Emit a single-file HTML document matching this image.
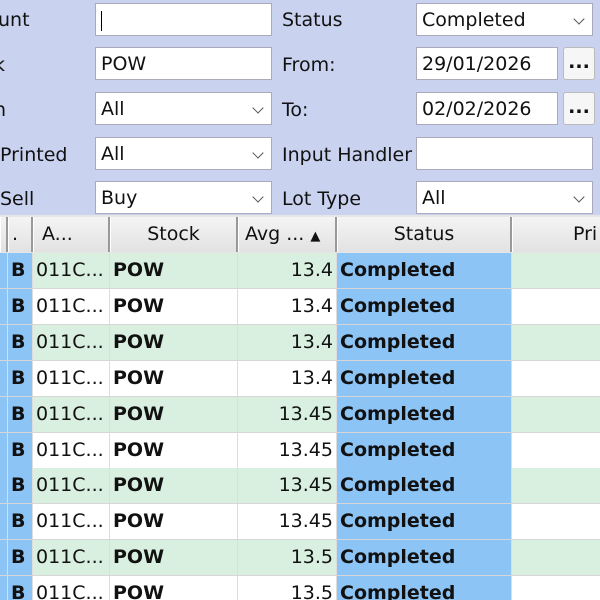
<!DOCTYPE html><html><head><style>
html,body{margin:0;width:600px;height:600px;overflow:hidden}
body{background:#c9d3f0;font-family:Tahoma,"DejaVu Sans","Liberation Sans",sans-serif;font-size:19px;color:#111;position:relative}
.a{position:absolute;white-space:nowrap}
.in{position:absolute;background:#fff;border:1px solid #aab;box-sizing:border-box;height:33px;padding-left:5px;line-height:33px}
.chev{position:absolute;right:9px;top:11px;width:7px;height:7px;border-right:1.5px solid #555;border-bottom:1.5px solid #555;transform:rotate(45deg)}
.btn{position:absolute;background:#f6f6f6;border:1px solid #bbb;border-radius:3px;box-sizing:border-box;width:32px;height:33px;text-align:center;line-height:28px;font-weight:bold}
.h{position:absolute;top:217px;height:35px;background:linear-gradient(#f4f4f4,#e2e2e2);border-right:2px solid #999;border-left:1px solid #fff;box-sizing:border-box;line-height:35px;text-align:center}
.row{position:absolute;left:0;width:600px;height:36px;border-bottom:1px solid #d6d6d6;box-sizing:border-box}
.c{position:absolute;top:0;height:100%;line-height:35px;box-sizing:border-box;border-right:1px solid #ddd}
</style></head><body>
<div class="a" style="left:-2px;top:9px">unt</div>
<div class="a" style="left:-6px;top:54px">k</div>
<div class="a" style="left:-6px;top:99px">n</div>
<div class="a" style="left:0;top:144px">Printed</div>
<div class="a" style="left:0;top:188px">Sell</div>
<div class="in" style="left:95px;top:3px;width:177px"><span style="display:inline-block;width:1px;height:20px;background:#000;vertical-align:middle"></span></div>
<div class="in" style="left:95px;top:47px;width:177px">POW</div>
<div class="in" style="left:95px;top:92px;width:177px">All<i class="chev"></i></div>
<div class="in" style="left:95px;top:137px;width:177px">All<i class="chev"></i></div>
<div class="in" style="left:95px;top:181px;width:177px">Buy<i class="chev"></i></div>
<div class="a" style="left:282px;top:9px">Status</div>
<div class="a" style="left:282px;top:54px">From:</div>
<div class="a" style="left:282px;top:99px">To:</div>
<div class="a" style="left:282px;top:144px">Input Handler</div>
<div class="a" style="left:282px;top:188px">Lot Type</div>
<div class="in" style="left:416px;top:3px;width:177px">Completed<i class="chev"></i></div>
<div class="in" style="left:416px;top:47px;width:142px">29/01/2026</div>
<div class="btn" style="left:563px;top:47px">...</div>
<div class="in" style="left:416px;top:92px;width:142px">02/02/2026</div>
<div class="btn" style="left:563px;top:92px">...</div>
<div class="in" style="left:416px;top:137px;width:177px"></div>
<div class="in" style="left:416px;top:181px;width:177px">All<i class="chev"></i></div>
<div style="position:absolute;left:0;top:215px;width:600px;height:38px;background:#e6e6e6"></div>
<div class="h" style="left:0;width:8px"></div>
<div class="h" style="left:8px;width:25px;text-align:left;padding-left:3px">.</div>
<div class="h" style="left:33px;width:77px;text-align:left;padding-left:8px">A...</div>
<div class="h" style="left:110px;width:128px">Stock</div>
<div class="h" style="left:238px;width:99px;text-align:left;padding-left:6px">Avg ... <span style="font-size:13px">▲</span></div>
<div class="h" style="left:337px;width:175px">Status</div>
<div class="h" style="left:512px;width:120px;padding-left:60px;text-align:left">Pri</div>
<div id="g"></div>
<script>
var v=["13.4","13.4","13.4","13.4","13.45","13.45","13.45","13.45","13.5","13.5"],s="";
for(var i=0;i<10;i++){var bg=i%2?"#fff":"#d9efdf",t=253+i*35.9;
s+='<div class="row" style="top:'+t+'px;background:'+bg+'">'+
'<div class="c" style="left:0;width:8px;background:#8cc4f6"></div>'+
'<div class="c" style="left:8px;width:25px;background:#8cc4f6;font-weight:bold;padding-left:3px">B</div>'+
'<div class="c" style="left:33px;width:77px;padding-left:3px">011C...</div>'+
'<div class="c" style="left:110px;width:128px;font-weight:bold;padding-left:3px">POW</div>'+
'<div class="c" style="left:238px;width:99px;text-align:right;padding-right:3px">'+v[i]+'</div>'+
'<div class="c" style="left:337px;width:175px;background:#8cc4f6;font-weight:bold;padding-left:3px">Completed</div></div>';}
document.getElementById("g").innerHTML=s;
</script>
</body></html>
